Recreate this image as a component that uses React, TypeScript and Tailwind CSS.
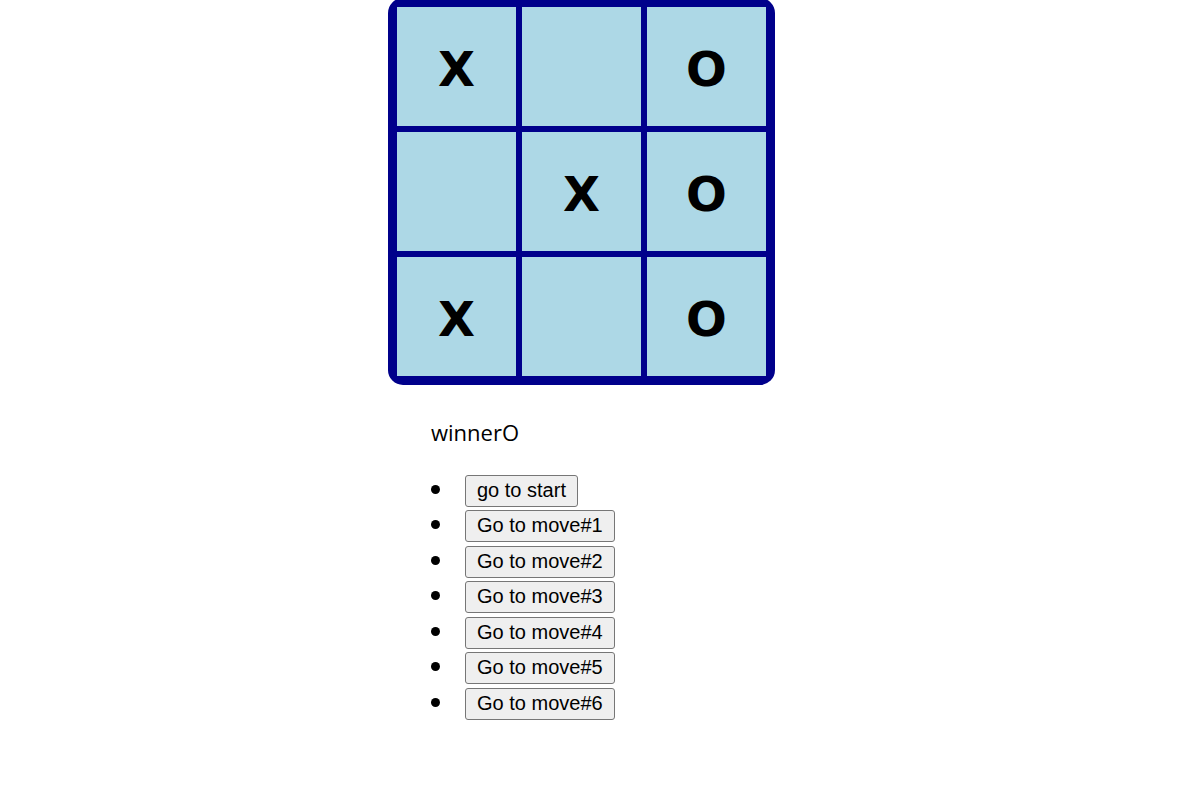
import { useState } from "react";

type Mark = "X" | "O" | null;
type Board = Mark[];

const LINES = [
  [0, 1, 2],
  [3, 4, 5],
  [6, 7, 8],
  [0, 3, 6],
  [1, 4, 7],
  [2, 5, 8],
  [0, 4, 8],
  [2, 4, 6],
];

function playMoves(moves: number[]): Board[] {
  const boards: Board[] = [Array(9).fill(null)];
  moves.forEach((cell, i) => {
    const next = [...boards[i]];
    next[cell] = i % 2 === 0 ? "X" : "O";
    boards.push(next);
  });
  return boards;
}

function findWinner(board: Board): Mark {
  for (const [a, b, c] of LINES) {
    if (board[a] && board[a] === board[b] && board[a] === board[c]) return board[a];
  }
  return null;
}

function Square({ value, index, onClick }: { value: Mark; index: number; onClick: () => void }) {
  return (
    <button
      type="button"
      aria-label={value ? undefined : `Square ${index + 1}`}
      onClick={onClick}
      className="flex h-[119px] w-[119px] items-center justify-center bg-[#add8e6] pt-1 font-['DejaVu_Sans',sans-serif] text-5xl leading-none font-bold text-black"
    >
      {value}
    </button>
  );
}

export default function App() {
  const [history, setHistory] = useState<Board[]>(() => playMoves([0, 2, 4, 5, 6, 8]));
  const [step, setStep] = useState(6);
  const board = history[step];
  const winner = findWinner(board);
  const next = step % 2 === 0 ? "X" : "O";

  const play = (cell: number) => {
    if (winner || board[cell]) return;
    const copy = [...board];
    copy[cell] = next;
    setHistory([...history.slice(0, step + 1), copy]);
    setStep(step + 1);
  };

  return (
    <main className="flex justify-center bg-white pr-4 font-['Open_Sans',sans-serif] text-black">
      <div className="-mt-0.5">
        <div className="grid grid-cols-3 gap-1.5 rounded-[15px] bg-[#00008b] p-[9px]">
          {board.map((value, i) => (
            <Square key={i} index={i} value={value} onClick={() => play(i)} />
          ))}
        </div>
        <section className="pt-8 pl-[43px]">
          <p className="text-[22px] leading-[30px]">{winner ? `winner${winner}` : `Next Player${next}`}</p>
          <ul className="mt-7 flex flex-col pb-8">
            {history.map((_, move) => (
              <li key={move} className="flex items-center gap-[25px] odd:mb-[3px] even:mb-1">
                <span className="mb-1 h-[9px] w-[9px] rounded-full bg-black" />
                <button
                  type="button"
                  onClick={() => setStep(move)}
                  className="h-8 rounded-[3px] border border-[#767676] bg-[#efefef] px-[11px] pb-0.5 font-['Liberation_Sans',Arial,sans-serif] text-[20px] leading-none"
                >
                  {move ? `Go to move#${move}` : "go to start"}
                </button>
              </li>
            ))}
          </ul>
        </section>
      </div>
    </main>
  );
}
